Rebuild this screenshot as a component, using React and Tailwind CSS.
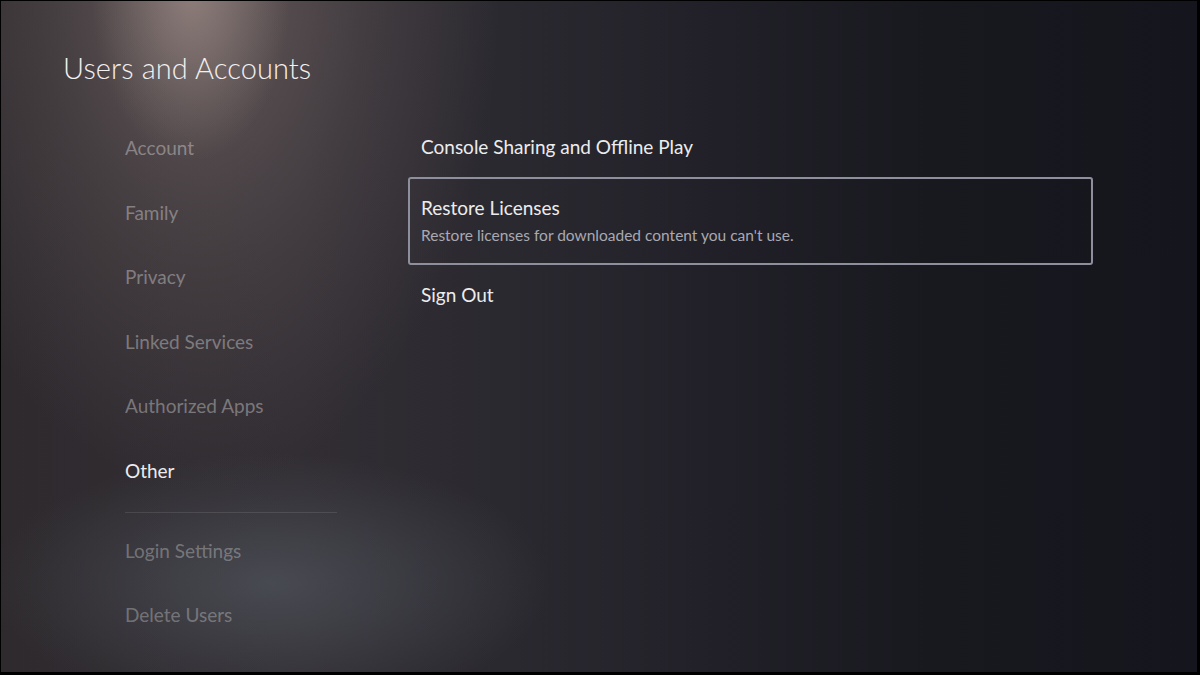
import React from 'react';

const NAV = ['Account', 'Family', 'Privacy', 'Linked Services', 'Authorized Apps'];

export default function App() {
  return (
    <div className="w-[1200px] h-[675px] bg-black pt-px pl-px pr-[3px] pb-[3px] font-['Lato','Open_Sans',sans-serif]">
      <div className="relative w-full h-full overflow-hidden bg-[radial-gradient(ellipse_100px_170px_at_190px_-10px,rgba(185,165,158,0.5),transparent_100%),radial-gradient(ellipse_300px_520px_at_200px_-30px,rgba(135,118,115,0.6),rgba(112,100,100,0.3)_55%,transparent_100%),radial-gradient(ellipse_280px_130px_at_270px_582px,rgba(95,103,112,0.5),transparent_100%),linear-gradient(90deg,#2e2a2e_0%,#312d33_25%,#2b2930_42%,#212028_60%,#18181f_78%,#15151d_100%)]">
        {/* Header */}
        <div className="h-[115px] pt-[49px] pl-[62px]">
          <h1 className="text-[29px] leading-[36px] font-light text-[#f2f0f0] tracking-[0.1px]">Users and Accounts</h1>
        </div>

        <div className="flex">
          {/* Left nav */}
          <div className="ml-[124px] w-[212px]">
            {NAV.map(item => (
              <div key={item} className="h-[64.6px] flex items-center text-[19px] text-white/35">
                {item}
              </div>
            ))}
            <div className="h-[64.6px] flex items-center text-[19px] text-[#ececee]">Other</div>
            <div className="mt-[8px] h-px bg-white/10" />
            <div className="mt-[7px] h-[64px] flex items-center text-[19px] text-white/30">Login Settings</div>
            <div className="h-[64px] flex items-center text-[19px] text-white/30">Delete Users</div>
          </div>

          {/* Right panel */}
          <div className="ml-[71px] w-[685px]">
            <div className="h-[61px] flex items-center pl-[13px] pt-[2px] text-[19px] text-[#ececee]">
              Console Sharing and Offline Play
            </div>
            <div className="h-[88px] border-2 border-[#8d8f9c] rounded-[3px] pl-[11px] pt-[16px]">
              <div className="text-[19px] leading-[26px] text-[#ececee]">Restore Licenses</div>
              <div className="mt-[4px] text-[15.5px] leading-[20px] text-[#a9a9b2]">
                Restore licenses for downloaded content you can't use.
              </div>
            </div>
            <div className="h-[60px] flex items-center pl-[13px] text-[19px] text-[#ececee]">Sign Out</div>
          </div>
        </div>
      </div>
    </div>
  );
}
